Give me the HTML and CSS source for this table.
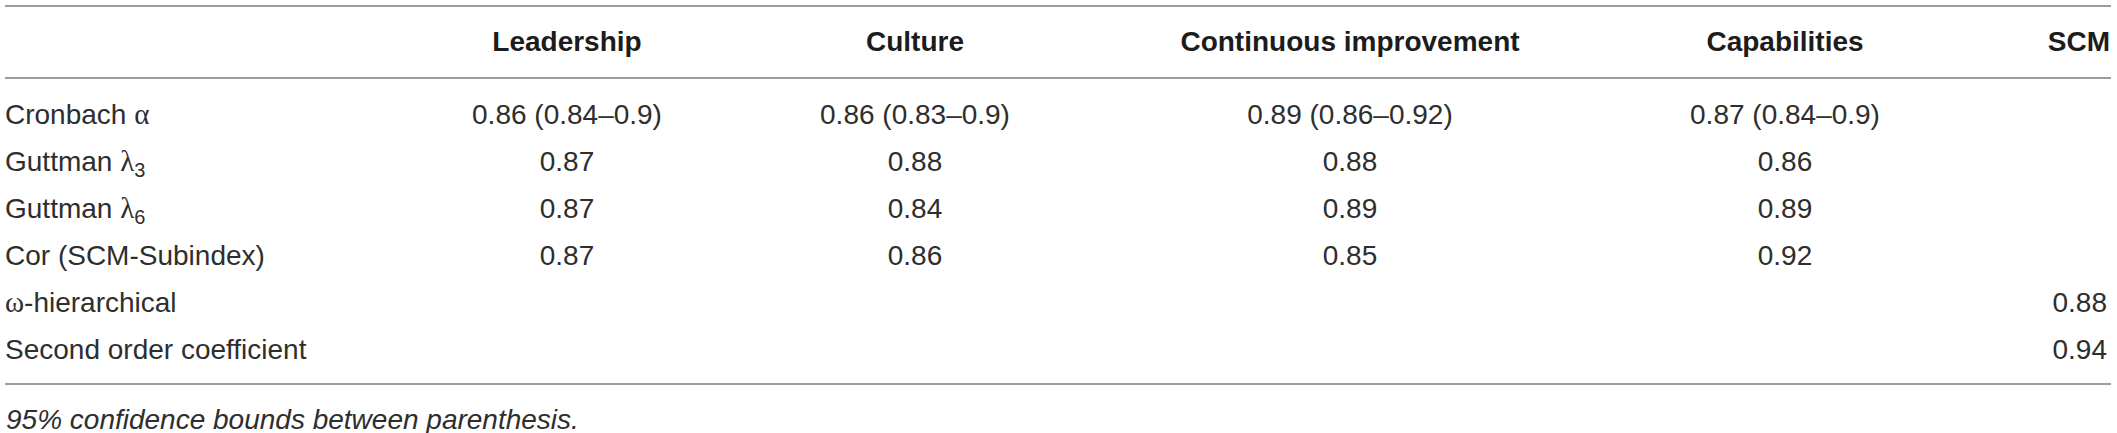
FILE: index.html
```html
<!DOCTYPE html>
<html lang="en">
<head>
<meta charset="utf-8">
<title>Reliability table</title>
<link rel="stylesheet" href="styles.css">
</head>
<body>
<table class="rel">
  <colgroup>
    <col class="c-label">
    <col class="c-lead">
    <col class="c-cult">
    <col class="c-cont">
    <col class="c-cap">
    <col class="c-scm">
  </colgroup>
  <thead>
    <tr>
      <th class="label"></th>
      <th>Leadership</th>
      <th>Culture</th>
      <th>Continuous improvement</th>
      <th>Capabilities</th>
      <th class="right">SCM</th>
    </tr>
  </thead>
  <tbody>
    <tr>
      <td class="label">Cronbach <span class="greek">α</span></td>
      <td>0.86 (0.84–0.9)</td>
      <td>0.86 (0.83–0.9)</td>
      <td>0.89 (0.86–0.92)</td>
      <td>0.87 (0.84–0.9)</td>
      <td class="right"></td>
    </tr>
    <tr>
      <td class="label">Guttman <span class="greek">λ</span><sub>3</sub></td>
      <td>0.87</td>
      <td>0.88</td>
      <td>0.88</td>
      <td>0.86</td>
      <td class="right"></td>
    </tr>
    <tr>
      <td class="label">Guttman <span class="greek">λ</span><sub>6</sub></td>
      <td>0.87</td>
      <td>0.84</td>
      <td>0.89</td>
      <td>0.89</td>
      <td class="right"></td>
    </tr>
    <tr>
      <td class="label">Cor (SCM-Subindex)</td>
      <td>0.87</td>
      <td>0.86</td>
      <td>0.85</td>
      <td>0.92</td>
      <td class="right"></td>
    </tr>
    <tr>
      <td class="label"><span class="greek">ω</span>-hierarchical</td>
      <td></td>
      <td></td>
      <td></td>
      <td></td>
      <td class="right">0.88</td>
    </tr>
    <tr>
      <td class="label">Second order coefficient</td>
      <td></td>
      <td></td>
      <td></td>
      <td></td>
      <td class="right">0.94</td>
    </tr>
  </tbody>
</table>
<p class="note">95% confidence bounds between parenthesis.</p>
</body>
</html>
```
FILE: styles.css
```css
html, body {
  margin: 0;
  padding: 0;
  background: #ffffff;
}

body {
  font-family: "Liberation Sans", Arial, Helvetica, sans-serif;
  font-size: 28px;
  color: #2e2e2e;
}

.rel {
  margin: 5px 0 0 5px;
  width: 2106px;
  border-collapse: collapse;
  table-layout: fixed;
}

.c-label { width: 395px; }
.c-lead  { width: 334px; }
.c-cult  { width: 362px; }
.c-cont  { width: 508px; }
.c-cap   { width: 362px; }
.c-scm   { width: 145px; }

.rel thead tr {
  border-top: 2px solid #9c9c9c;
  border-bottom: 2px solid #9c9c9c;
}

.rel th {
  height: 70px;
  padding: 0;
  font-weight: bold;
  color: #1c1c1c;
  text-align: center;
  vertical-align: middle;
  white-space: nowrap;
}

.rel td {
  height: 47px;
  padding: 0;
  text-align: center;
  vertical-align: middle;
  white-space: nowrap;
  line-height: 32px;
}

.rel tbody tr:first-child td {
  padding-top: 12px;
}

.rel tbody tr:last-child td {
  padding-bottom: 10px;
}

.rel tbody {
  border-bottom: 2px solid #9c9c9c;
}

.rel .label {
  text-align: left;
  padding-left: 0;
}

.rel .right {
  text-align: right;
  padding-right: 4px;
}

.rel th.right {
  padding-right: 1px;
}

.greek {
  font-family: "Liberation Serif", "Times New Roman", serif;
  font-size: 29px;
}

sub {
  font-size: 20px;
  vertical-align: -6px;
  line-height: 0;
}

.note {
  margin: 17px 0 0 6px;
  font-style: italic;
  line-height: 36px;
}
```
